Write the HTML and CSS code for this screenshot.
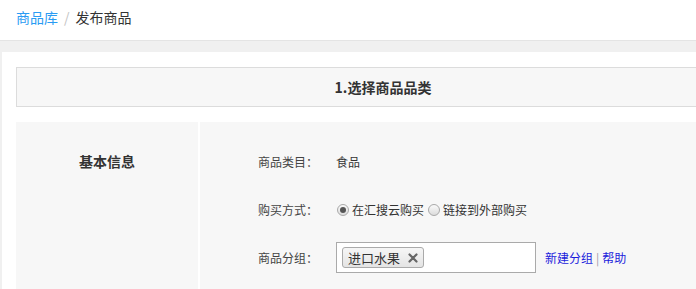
FILE: index.html
```html
<!DOCTYPE html>
<html lang="zh-CN">
<head>
  <meta charset="UTF-8" />
  <meta name="viewport" content="width=device-width, initial-scale=1.0"/>
  <title>发布商品</title>
  <link rel="stylesheet" href="styles.css">
</head>
<body>
  <div class="page">
    <div class="breadcrumb">
      <a class="crumb-link" href="#">商品库</a>
      <span class="crumb-sep">/</span>
      <span class="crumb-current">发布商品</span>
    </div>

    <div class="panel">
      <div class="step-title">1.选择商品品类</div>

      <div class="section">
        <div class="section-name">基本信息</div>
        <div class="section-body">
          <div class="form-row">
            <span class="form-label">商品类目：</span>
            <span class="form-value">食品</span>
          </div>
          <div class="form-row">
            <span class="form-label">购买方式：</span>
            <label class="radio-item">
              <span class="radio checked"></span>在汇搜云购买
            </label>
            <label class="radio-item">
              <span class="radio"></span>链接到外部购买
            </label>
          </div>
          <div class="form-row">
            <span class="form-label">商品分组：</span>
            <div class="tag-input">
              <span class="tag">进口水果
                <svg class="tag-close" width="10" height="10" viewBox="0 0 10 10">
                  <path d="M1.5 1.5 L8.5 8.5 M8.5 1.5 L1.5 8.5" stroke="#666" stroke-width="2.2" stroke-linecap="round"/>
                </svg>
              </span>
            </div>
            <div class="row-links">
              <a class="blue-link" href="#">新建分组</a>
              <span class="link-sep">|</span>
              <a class="blue-link" href="#">帮助</a>
            </div>
          </div>
        </div>
      </div>
    </div>
  </div>
</body>
</html>
```

FILE: styles.css
```css
* {
  margin: 0;
  padding: 0;
  box-sizing: border-box;
  font-family: 'Noto Sans CJK SC', 'Noto Sans', sans-serif;
}

html, body {
  overflow: hidden;
}

body {
  background: #f0f0f0;
  color: #333;
  height: 100vh;
}

.page {
  width: 764px;
}

.breadcrumb {
  height: 41px;
  background: #fff;
  border-bottom: 1px solid #e4e4e4;
  display: flex;
  align-items: center;
  padding: 0 0 7px 16px;
  font-size: 14px;
}

.crumb-link {
  color: #2a9bf3;
  text-decoration: none;
}

.crumb-sep {
  color: #c4c4c4;
  margin: 0 6px;
}

.crumb-current {
  color: #333;
}

.panel {
  background: #fff;
  margin: 11px 0 0 2px;
  padding: 15px 14px 40px;
  min-height: 300px;
}

.step-title {
  height: 40px;
  border: 1px solid #dcdcdc;
  background: #f7f7f7;
  display: flex;
  align-items: center;
  justify-content: center;
  font-size: 14px;
  font-weight: 700;
  color: #333;
}

.section {
  margin-top: 15px;
  display: flex;
  gap: 2px;
  min-height: 220px;
}

.section-name {
  width: 182px;
  background: #f7f7f7;
  padding-top: 29px;
  text-align: center;
  font-size: 14px;
  font-weight: 700;
  line-height: 20px;
}

.section-body {
  flex: 1;
  background: #f7f7f7;
  padding: 24px 0 0 58px;
  display: flex;
  flex-direction: column;
  gap: 17px;
  font-size: 12px;
}

.form-row {
  height: 31px;
  display: flex;
  align-items: center;
}

.form-label {
  width: 78px;
  color: #444;
}

.form-value {
  color: #333;
}

.radio-item {
  display: flex;
  align-items: center;
  color: #333;
  margin-right: 4px;
}

.radio {
  width: 12px;
  height: 12px;
  border-radius: 50%;
  border: 1px solid #a9a9a9;
  background: linear-gradient(#fafafa, #dcdcdc);
  margin: 0 3px 0 1px;
  position: relative;
}

.radio.checked::after {
  content: '';
  position: absolute;
  left: 2px;
  top: 2px;
  width: 6px;
  height: 6px;
  border-radius: 50%;
  background: #555;
}

.radio-item + .radio-item .radio {
  margin-left: 0;
}

.tag-input {
  width: 200px;
  height: 31px;
  border: 1px solid #aaa;
  background: #fff;
  padding: 4px 5px;
  display: flex;
  align-items: flex-start;
}

.tag {
  height: 21px;
  display: flex;
  align-items: center;
  padding: 0 5px 0 5px;
  border: 1px solid #aaa;
  border-radius: 3px;
  background: linear-gradient(#f6f6f6, #e4e4e4);
  font-size: 13px;
  color: #333;
}

.tag-close {
  margin-left: 8px;
}

.row-links {
  margin-left: 9px;
  display: flex;
  align-items: center;
}

.blue-link {
  color: #1c1cdc;
  text-decoration: none;
}

.link-sep {
  color: #99a;
  margin: 0 3px;
}
```
